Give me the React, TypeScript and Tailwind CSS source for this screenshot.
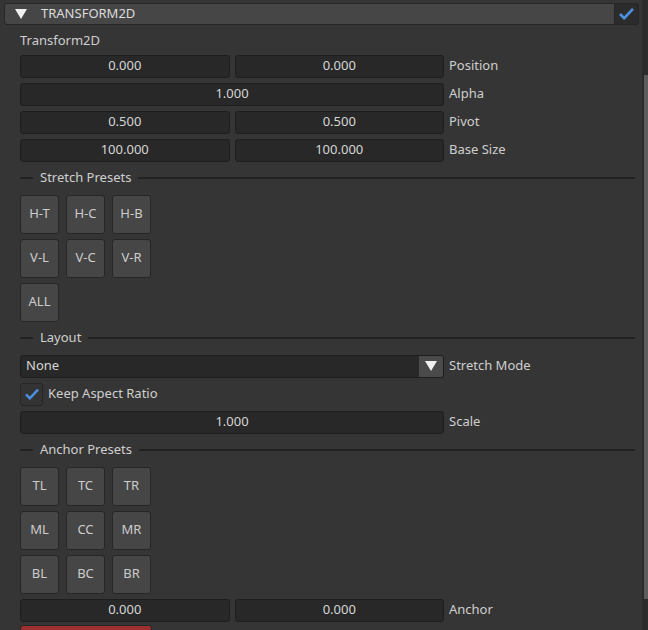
import type { ReactNode } from 'react';

const font = { fontFamily: '"Noto Sans", "Open Sans", sans-serif' };

const Check = ({ className }: { className?: string }) => (
  <svg viewBox="0 0 18 14" className={className}>
    <path d="M2 7.5 L6.5 12 L16 2" fill="none" stroke="#4d8fe0" strokeWidth="3" strokeLinejoin="miter" />
  </svg>
);

const DownTriangle = ({ className }: { className?: string }) => (
  <svg viewBox="0 0 12 10" className={className}>
    <path d="M0 0 H12 L6 10 Z" fill="#f0f0f0" />
  </svg>
);

const Field = ({ value }: { value: string }) => (
  <div className="flex-1 h-[23px] flex items-center justify-center bg-[#282828] border border-[#1e1e1e] rounded-[3px] text-[13px] text-[#d6d6d6]">
    {value}
  </div>
);

const Row = ({ label, children }: { label: string; children: ReactNode }) => (
  <div className="flex items-center gap-[5px] h-[23px]">
    <div className="w-[424px] flex gap-[5px]">{children}</div>
    <span className="text-[13px] text-[#cfcfcf]">{label}</span>
  </div>
);

const Separator = ({ title }: { title: string }) => (
  <div className="flex items-center h-[20px]">
    <div className="w-[13px] h-[2px] bg-[#222]" />
    <span className="px-[7px] text-[13px] text-[#cfcfcf]">{title}</span>
    <div className="flex-1 h-[2px] bg-[#222]" />
  </div>
);

const PresetGrid = ({ rows }: { rows: string[][] }) => (
  <div className="flex flex-col gap-[5px]">
    {rows.map((r, i) => (
      <div key={i} className="flex gap-[7px]">
        {r.map(b => (
          <div
            key={b}
            className="w-[39px] h-[39px] flex items-center justify-center bg-[#464646] border border-[#262626] rounded-[3px] text-[13px] text-[#cccccc]"
          >
            {b}
          </div>
        ))}
      </div>
    ))}
  </div>
);

export default function App() {
  return (
    <div className="w-[648px] h-[630px] bg-[#353535] flex overflow-hidden" style={font}>
      <div className="flex-1 flex flex-col pl-[4px] pr-[3px] pt-[3px]">
        {/* component header */}
        <div className="flex h-[23px]">
          <div className="flex-1 flex items-center bg-[#464646] border border-[#262626] rounded-l-[3px]">
            <DownTriangle className="w-[12px] h-[10px] ml-[10px]" />
            <span className="ml-[14px] text-[13px] text-[#dcdcdc]">TRANSFORM2D</span>
          </div>
          <div className="w-[24px] flex items-center justify-center bg-[#2c2c2c] border border-[#262626] border-l-0 rounded-r-[3px]">
            <Check className="w-[17px] h-[13px]" />
          </div>
        </div>

        <div className="flex flex-col pl-[16px] pr-[4px]">
          <div className="h-[20px] mt-[6px] mb-[4px] flex items-center text-[13px] text-[#cfcfcf]">Transform2D</div>

          <div className="flex flex-col gap-[5px]">
            <Row label="Position">
              <Field value="0.000" />
              <Field value="0.000" />
            </Row>
            <Row label="Alpha">
              <Field value="1.000" />
            </Row>
            <Row label="Pivot">
              <Field value="0.500" />
              <Field value="0.500" />
            </Row>
            <Row label="Base Size">
              <Field value="100.000" />
              <Field value="100.000" />
            </Row>
          </div>

          <div className="mt-[6px] mb-[7px]">
            <Separator title="Stretch Presets" />
          </div>
          <PresetGrid rows={[['H-T', 'H-C', 'H-B'], ['V-L', 'V-C', 'V-R'], ['ALL']]} />

          <div className="mt-[6px] mb-[7px]">
            <Separator title="Layout" />
          </div>
          <div className="flex flex-col gap-[5px]">
            <Row label="Stretch Mode">
              <div className="flex-1 h-[23px] flex bg-[#282828] border border-[#1e1e1e] rounded-[3px] overflow-hidden">
                <span className="flex-1 flex items-center pl-[5px] text-[13px] text-[#d6d6d6]">None</span>
                <div className="w-[24px] flex items-center justify-center bg-[#4a4a4a]">
                  <DownTriangle className="w-[12px] h-[10px]" />
                </div>
              </div>
            </Row>
            <div className="flex items-center gap-[5px] h-[23px]">
              <div className="w-[23px] h-[23px] flex items-center justify-center bg-[#333] border border-[#262626] rounded-[3px]">
                <Check className="w-[16px] h-[12px]" />
              </div>
              <span className="text-[13px] text-[#cfcfcf]">Keep Aspect Ratio</span>
            </div>
            <Row label="Scale">
              <Field value="1.000" />
            </Row>
          </div>

          <div className="mt-[6px] mb-[7px]">
            <Separator title="Anchor Presets" />
          </div>
          <PresetGrid rows={[['TL', 'TC', 'TR'], ['ML', 'CC', 'MR'], ['BL', 'BC', 'BR']]} />

          <div className="mt-[5px]">
            <Row label="Anchor">
              <Field value="0.000" />
              <Field value="0.000" />
            </Row>
          </div>

          <div className="mt-[3px] w-[132px] h-[30px] bg-[#9c2f2f] border border-[#262626] rounded-[3px]" />
        </div>
      </div>

      {/* scrollbar */}
      <div className="w-[6px] h-full bg-[#2b2b2b] flex flex-col items-end">
        <div className="w-[4px] h-[524px] mt-[75px] bg-[#5c5c5c]" />
      </div>
    </div>
  );
}
